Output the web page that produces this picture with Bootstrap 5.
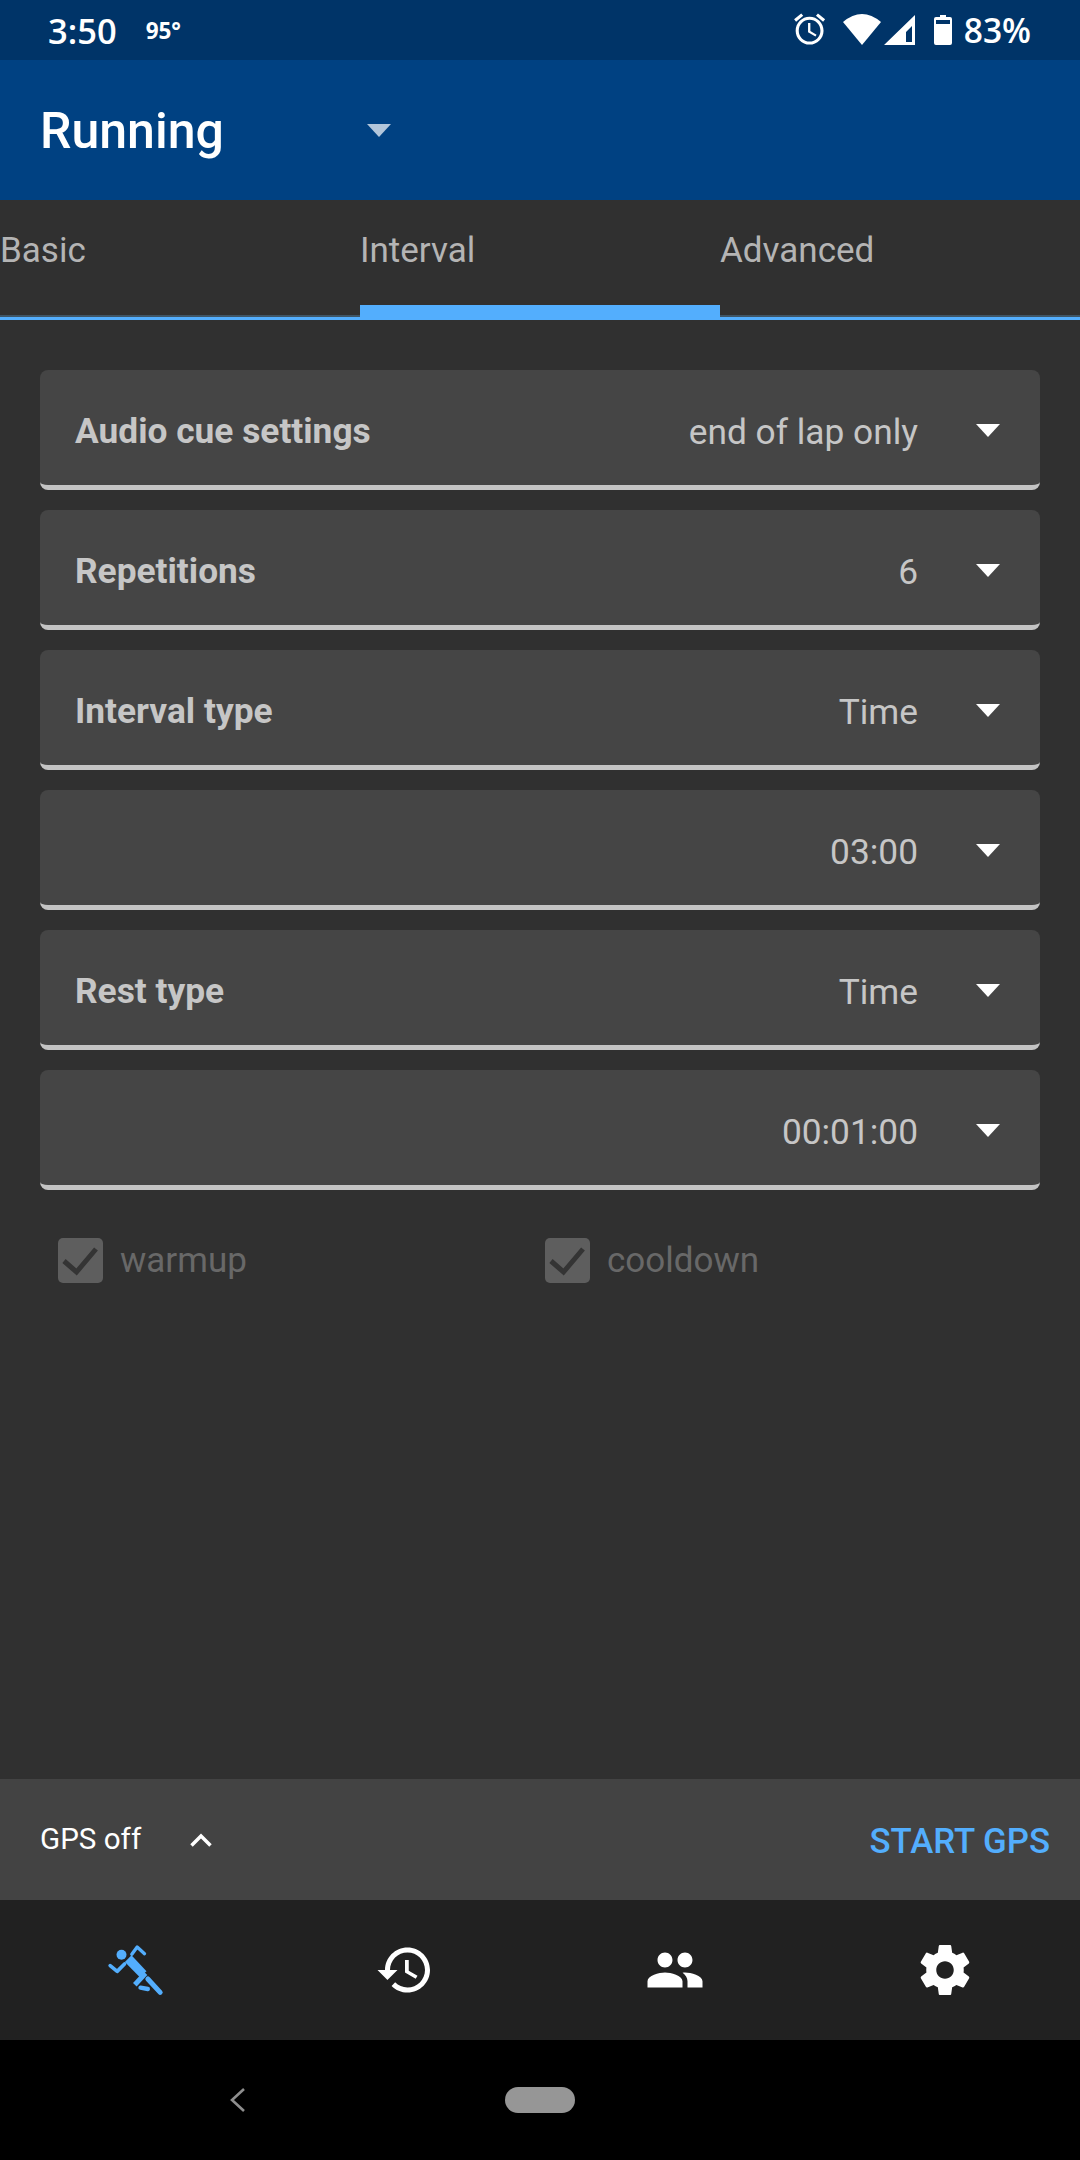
<!DOCTYPE html>
<html lang="en">
<head>
    <meta charset="utf-8">
    <title>Running</title>
    <link href="https://cdn.jsdelivr.net/npm/bootstrap@5.3.0/dist/css/bootstrap.min.css" rel="stylesheet">
    <style>
        html, body { height: 2160px; margin: 0; }
        body { width: 1080px; background: #303030; font-family: Roboto, "Liberation Sans", sans-serif; overflow: hidden; }
        .status-strip { height: 60px; background: #003468; color: #fff; padding: 2px 49px 0 48px; font-family: "Open Sans", Roboto, sans-serif; font-weight: 600; line-height: 1; }
        .status-time { font-size: 34.5px; }
        .status-temp { font-size: 22.5px; font-weight: 700; margin-left: 29px; }
        .status-batt { font-size: 33.5px; }
        .app-head { height: 140px; background: #004182; color: #fff; padding-left: 40px; }
        .app-title { font-size: 50px; font-weight: 500; line-height: 1; width: 327px; margin: 0; padding-top: 2px; }
        .head-caret { border-left: 12.5px solid transparent; border-right: 12.5px solid transparent; border-top: 13px solid #b2c6db; }
        .tab-strip { height: 120px; flex-wrap: nowrap; }
        .tab-strip .nav-link { width: 360px; height: 120px; padding: 30px 0 0; font-size: 35px; line-height: 41px; color: #b4b4b4; border-bottom: 3px solid #53aefd; box-shadow: inset 0 -2px 0 #3f5565; }
        .tab-strip .nav-link.active { border-bottom-width: 15px; box-shadow: none; }
        .set-list { padding: 50px 40px 0; gap: 20px; }
        .set-card { height: 120px; background: #454545; border: 0; border-bottom: 5px solid #c4c4c4; border-radius: 8px; padding: 8px 40px 0 35px; color: #c6c6c6; font-size: 35.3px; }
        .set-label { font-weight: 700; }
        .set-value { margin-left: auto; margin-right: 58px; font-weight: 400; padding-top: 1px; }
        .drop-caret { border-left: 12.5px solid transparent; border-right: 12.5px solid transparent; border-top: 13px solid #fff; margin-top: -3px; }
        .opt-row { padding: 47px 0 0 58px; color: #686868; font-size: 35px; }
        .opt-item { width: 487px; gap: 17px; line-height: 45px; }
        .opt-text { padding-top: 1px; }
        .opt-box { width: 45px; height: 45px; background: #5e5e5e; border-radius: 5px; }
        .gps-bar { height: 121px; background: #434343; padding: 0 30px 0 40px; color: #fff; font-size: 29.6px; }
        .gps-chevron { margin-left: 49px; }
        .gps-start { font-size: 34.8px; font-weight: 500; color: #53aefd; margin-left: auto; padding-top: 3px; }
        .tab-nav { height: 140px; background: #212121; }
        .tab-nav > div { width: 270px; }
        .sys-nav { height: 120px; background: #000; padding-left: 230px; }
    </style>
</head>
<body class="d-flex flex-column">
    <div class="status-strip d-flex align-items-center">
        <span class="status-time">3:50</span>
        <span class="status-temp">95°</span>
        <div class="ms-auto d-flex align-items-center">
            <svg width="173" height="60" viewBox="792 0 173 60" fill="#fff">
                <g transform="translate(792 9.5) scale(1.55)">
                    <path d="M22 5.72l-4.6-3.86-1.29 1.53 4.6 3.86L22 5.72zM7.88 3.39L6.6 1.86 2 5.71l1.29 1.53 4.59-3.85zM12.5 8H11v6l4.75 2.85.75-1.23-4-2.37V8zM12 4c-4.97 0-9 4.03-9 9s4.02 9 9 9c4.97 0 9-4.03 9-9s-4.03-9-9-9zm0 16c-3.87 0-7-3.13-7-7s3.13-7 7-7 7 3.13 7 7-3.13 7-7 7z"/>
                </g>
                <path d="M863 44L844 21Q863 5 882 21Z"/>
                <path fill-rule="evenodd" d="M885 44L916 14V44ZM907 41H913V25L907 31Z"/>
                <path fill-rule="evenodd" d="M941 14H947V16H951Q953 16 953 18V42Q953 44 951 44H937Q935 44 935 42V18Q935 16 937 16H941ZM937 19V23H951V19Z"/>
            </svg>
            <span class="status-batt">83%</span>
        </div>
    </div>

    <div class="app-head d-flex align-items-center">
        <h1 class="app-title">Running</h1>
        <span class="head-caret"></span>
    </div>

    <nav class="nav tab-strip">
        <a class="nav-link" href="#">Basic</a>
        <a class="nav-link active" href="#">Interval</a>
        <a class="nav-link" href="#">Advanced</a>
    </nav>

    <div class="set-list d-flex flex-column">
        <div class="card set-card flex-row align-items-center"><span class="set-label">Audio cue settings</span><span class="set-value">end of lap only</span><span class="drop-caret"></span></div>
        <div class="card set-card flex-row align-items-center"><span class="set-label">Repetitions</span><span class="set-value">6</span><span class="drop-caret"></span></div>
        <div class="card set-card flex-row align-items-center"><span class="set-label">Interval type</span><span class="set-value">Time</span><span class="drop-caret"></span></div>
        <div class="card set-card flex-row align-items-center"><span class="set-value">03:00</span><span class="drop-caret"></span></div>
        <div class="card set-card flex-row align-items-center"><span class="set-label">Rest type</span><span class="set-value">Time</span><span class="drop-caret"></span></div>
        <div class="card set-card flex-row align-items-center"><span class="set-value">00:01:00</span><span class="drop-caret"></span></div>
    </div>

    <div class="opt-row d-flex">
        <div class="opt-item d-flex align-items-center">
            <span class="opt-box d-flex"><svg width="45" height="45" viewBox="0 0 45 45" fill="none" stroke="#343434" stroke-width="5"><path d="M6 23L18.5 34L38 11"/></svg></span>
            <span class="opt-text">warmup</span>
        </div>
        <div class="opt-item d-flex align-items-center">
            <span class="opt-box d-flex"><svg width="45" height="45" viewBox="0 0 45 45" fill="none" stroke="#343434" stroke-width="5"><path d="M6 23L18.5 34L38 11"/></svg></span>
            <span class="opt-text">cooldown</span>
        </div>
    </div>

    <div class="flex-grow-1"></div>

    <div class="gps-bar d-flex align-items-center">
        <span>GPS off</span>
        <svg class="gps-chevron" width="22" height="14" viewBox="0 0 22 14" fill="none" stroke="#fff" stroke-width="3.5"><path d="M1.5 12.5L11 3L20.5 12.5"/></svg>
        <span class="gps-start">START GPS</span>
    </div>

    <div class="tab-nav d-flex align-items-center">
        <div class="d-flex justify-content-center">
            <svg width="57" height="54" viewBox="50 40 170 162" fill="none" stroke="#53aefd" stroke-linecap="round">
                <circle cx="93" cy="75" r="15" fill="#53aefd" stroke="none"/>
                <path d="M123 77L168 125L148 143L103 97Z" fill="#53aefd" stroke="none"/>
                <path d="M124 74L140 52L162 72" stroke-width="10" stroke-linejoin="round"/>
                <path d="M102 103L80 125L59 108" stroke-width="11" stroke-linejoin="round"/>
                <path d="M165 131L133 165" stroke-width="15" stroke-linecap="butt"/>
                <path d="M172 148L209 188" stroke-width="15"/>
                <path d="M150 174L172 178" stroke-width="13"/>
            </svg>
        </div>
        <div class="d-flex justify-content-center">
            <svg width="60" height="60" viewBox="0 0 24 24" fill="#fff"><path d="M13 3c-4.97 0-9 4.03-9 9H1l3.89 3.89.07.14L9 12H6c0-3.87 3.13-7 7-7s7 3.13 7 7-3.13 7-7 7c-1.93 0-3.68-.79-4.94-2.06l-1.42 1.42C8.27 19.99 10.51 21 13 21c4.97 0 9-4.03 9-9s-4.03-9-9-9zm-1 5v5l4.28 2.54.72-1.21-3.5-2.08V8H12z"/></svg>
        </div>
        <div class="d-flex justify-content-center">
            <svg width="60" height="60" viewBox="0 0 24 24" fill="#fff"><path d="M16 11c1.66 0 2.99-1.34 2.99-3S17.66 5 16 5c-1.66 0-3 1.34-3 3s1.34 3 3 3zm-8 0c1.66 0 2.99-1.34 2.99-3S9.66 5 8 5C6.34 5 5 6.34 5 8s1.34 3 3 3zm0 2c-2.33 0-7 1.17-7 3.5V19h14v-2.5c0-2.33-4.67-3.5-7-3.5zm8 0c-.29 0-.62.02-.97.05 1.16.84 1.97 1.97 1.97 3.45V19h6v-2.5c0-2.33-4.67-3.5-7-3.5z"/></svg>
        </div>
        <div class="d-flex justify-content-center">
            <svg width="60" height="60" viewBox="0 0 24 24" fill="#fff"><path d="M19.43 12.98c.04-.32.07-.64.07-.98s-.03-.66-.07-.98l2.11-1.65c.19-.15.24-.42.12-.64l-2-3.46c-.12-.22-.39-.3-.61-.22l-2.49 1c-.52-.4-1.08-.73-1.69-.98l-.38-2.65C14.46 2.18 14.25 2 14 2h-4c-.25 0-.46.18-.49.42l-.38 2.65c-.61.25-1.17.59-1.69.98l-2.49-1c-.23-.09-.49 0-.61.22l-2 3.46c-.13.22-.07.49.12.64l2.11 1.65c-.04.32-.07.65-.07.98s.03.66.07.98l-2.11 1.65c-.19.15-.24.42-.12.64l2 3.46c.12.22.39.3.61.22l2.49-1c.52.4 1.08.73 1.69.98l.38 2.65c.03.24.24.42.49.42h4c.25 0 .46-.18.49-.42l.38-2.65c.61-.25 1.17-.59 1.69-.98l2.49 1c.23.09.49 0 .61-.22l2-3.46c.12-.22.07-.49-.12-.64l-2.11-1.65zM12 15.5c-1.93 0-3.5-1.57-3.5-3.5s1.57-3.5 3.5-3.5 3.5 1.57 3.5 3.5-1.57 3.5-3.5 3.5z"/></svg>
        </div>
    </div>

    <div class="sys-nav d-flex align-items-center">
        <svg width="345" height="26" viewBox="230 2087 345 26">
            <path d="M244 2089L232 2100L244 2111" fill="none" stroke="#8e8e8e" stroke-width="2.6"/>
            <rect x="505" y="2087" width="70" height="26" rx="13" fill="#969696"/>
        </svg>
    </div>

    <script>
        // tabs only toggle the highlight, the screen itself is static
        document.querySelectorAll(".tab-strip .nav-link").forEach((link) => {
            link.addEventListener("click", (e) => {
                e.preventDefault();
                document.querySelector(".tab-strip .active").classList.remove("active");
                link.classList.add("active");
            });
        });
    </script>
    <script src="https://cdn.jsdelivr.net/npm/bootstrap@5.3.0/dist/js/bootstrap.bundle.min.js"></script>
</body>
</html>
